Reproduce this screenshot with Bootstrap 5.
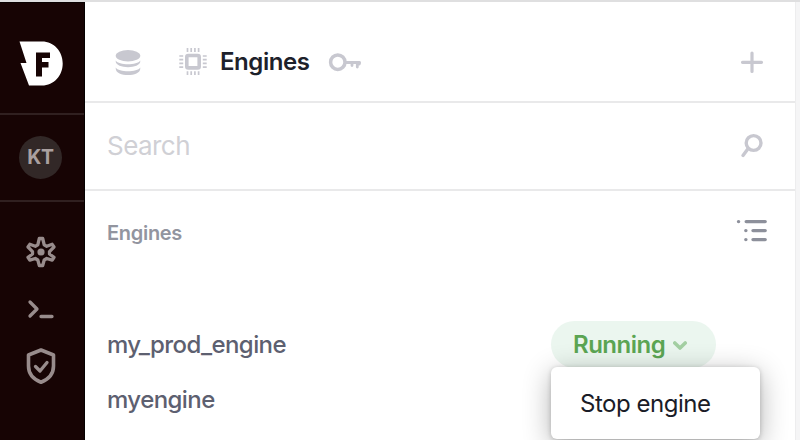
<!DOCTYPE html>
<html lang="en">
<head>
<meta charset="utf-8">
<meta name="viewport" content="width=device-width, initial-scale=1">
<title>Engines</title>
<link href="https://cdn.jsdelivr.net/npm/bootstrap@5.3.0/dist/css/bootstrap.min.css" rel="stylesheet">
<style>
body{font-family:Inter,"Liberation Sans",sans-serif;background:#f5f5f6;line-height:1}
svg{display:block;flex:none}
.app{height:440px;border-top:2px solid #dfdfe0}
.side{width:85px;background:#170404;border-right:1px solid #050101;border-top:1px solid #0a0202}
.side-sec{border-bottom:2px solid #302020}
.sec-logo{height:112px;padding:36px 0 0 18px}
.sec-user{height:87px;padding:21px 0 0 19px}
.avatar{width:43px;height:43px;background:#322827;color:#aaa0a0;font-size:19.5px;font-weight:700;letter-spacing:-.3px;padding-top:1px}
.side-icons{padding:33px 0 0 25px}
.panel{width:711px;border-right:1px solid #ededee}
.line{border-bottom:2px solid #e9e9ea}
.bar-top{height:101px;padding:21px 30px 0 30px}
.bar-find{height:88px;padding:0 30px 0 22px}
.bar-list{height:85px;padding:0 27px 0 22px}
.chip{margin-left:38px}
.ttl{font-size:24px;font-weight:600;letter-spacing:-.45px;color:#1d212b;margin:0 19px 0 13px;padding-top:1px}
.find{font-size:26px;letter-spacing:-.55px;color:#d0d0d5}
.sub{font-size:20px;font-weight:600;letter-spacing:-.3px;color:#92959f;margin-top:-1px}
.menu-ico{margin-top:-5px}
.eng-rows{padding:45px 79px 0 22px}
.eng-name{font-size:24px;font-weight:500;letter-spacing:-.57px;color:#5d6070}
.eng-row{height:47px}
.pill{width:165px;height:47px;background:#ebf6ef;color:#5ba553;font-size:24px;font-weight:600;letter-spacing:-.5px;padding-left:22px}
.pop{top:46px;left:0;width:209px;height:72px;border-radius:6px;font-size:24px;letter-spacing:-.47px;color:#1a1c27;padding:1px 0 0 29px;box-shadow:0 6px 28px rgba(0,0,0,.3),0 1px 5px rgba(0,0,0,.2)}
</style>
</head>
<body class="overflow-hidden">
<div class="app d-flex">
  <nav class="side flex-shrink-0">
    <div class="side-sec sec-logo">
      <svg width="46" height="50" viewBox="18 39 46 50"><path d="M19.500 41.500H42C54 41.500 62.700 51.500 62.700 63.500S54 85.500 42 85.500H29L20.500 63H26.500Z" fill="#fff"/><path d="M36 52.500H50V58H42V62H48.500V67.500H42V76.500H36Z" fill="#170404"/></svg>
    </div>
    <div class="side-sec sec-user"><div class="avatar rounded-circle d-flex align-items-center justify-content-center">KT</div></div>
    <div class="side-icons">
      <svg width="32" height="160" viewBox="25 235 32 160" fill="none" stroke="#988c8c" stroke-width="3.300" stroke-linecap="round" stroke-linejoin="round">
        <path d="M39.300 238.500H42.700L44.200 244.800L46.700 246.300L52.200 244.300L54 247L49.500 251.600V254L54 257.300L52.200 260.200L46.700 258.500L44.200 260L42.700 265.500H39.300L37.800 260L35.300 258.500L29.800 260.200L28 257.300L32.500 254V251.600L28 247L29.800 244.300L35.300 246.300L37.800 244.800Z"/>
        <circle cx="41" cy="252" r="3.600" fill="#988c8c" stroke="none"/>
        <path d="M30 302L37 309L30 316M41 316.500H52"/>
        <path d="M41 350L53.500 355V366C53.500 374 48 379.500 41 382.200C34 379.500 28.500 374 28.500 366V355Z" stroke-width="3.600"/>
        <path d="M35.500 366.500L40 371L47 362.500"/>
      </svg>
    </div>
  </nav>
  <main class="panel bg-white">
    <header class="bar-top line d-flex align-items-center">
      <svg width="26" height="28" viewBox="115 48 26 28" fill="#c8c8d0"><ellipse cx="128" cy="55.700" rx="12.300" ry="5.700"/><path d="M115.800 60.500C118.500 65.500 137.500 65.500 140.200 60.500C142 69.500 114 69.500 115.800 60.500ZM115.800 67.500C118.500 72.500 137.500 72.500 140.200 67.500C142 77.500 114 77.500 115.800 67.500Z"/></svg>
      <svg class="chip" width="28" height="28" viewBox="179 48 28 28" fill="none" stroke="#c8c8d0"><rect x="186.800" y="55.500" width="12.400" height="12.400" rx="1.500" stroke-width="3.600"/><path stroke-width="1.700" d="M187.500 48V52M191.200 48V52M194.900 48V52M198.600 48V52M187.500 71.200V75M191.200 71.200V75M194.900 71.200V75M198.600 71.200V75M179.300 56H183.200M179.300 59.700H183.200M179.300 63.400H183.200M179.300 67.100H183.200M202.800 56H206.700M202.800 59.700H206.700M202.800 63.400H206.700M202.800 67.100H206.700"/></svg>
      <h1 class="ttl">Engines</h1>
      <svg width="34" height="20" viewBox="328 52 34 20" fill="none" stroke="#c8c8d0"><circle cx="337.800" cy="62.200" r="7.200" stroke-width="3.500"/><path stroke-width="3" stroke-linecap="round" d="M346 62.500H359.500"/><path stroke-width="2.800" stroke-linecap="round" d="M352 63V65.500M357.300 63V67M359.300 63V64"/></svg>
      <svg class="ms-auto" width="26" height="26" viewBox="739 49 26 26" stroke="#c8c8d0" stroke-width="3.200" stroke-linecap="round"><path d="M752 53V71.500M742.500 62.300H761.500"/></svg>
    </header>
    <div class="bar-find line d-flex align-items-center justify-content-between">
      <span class="find">Search</span>
      <svg width="26" height="28" viewBox="739 133 26 28" fill="none" stroke="#c8c8d0" stroke-width="3.400" stroke-linecap="round"><circle cx="753.600" cy="144" r="7.400"/><path d="M748 149.800L743 156.500"/></svg>
    </div>
    <div class="bar-list d-flex align-items-center justify-content-between">
      <h2 class="sub mb-0">Engines</h2>
      <svg class="menu-ico" width="32" height="28" viewBox="735 217 32 28" fill="none" stroke="#8d909b" stroke-width="3.400" stroke-linecap="round"><path d="M737.500 221.600H737.600M745.200 221.600H764.200M744.800 230.600H744.900M752 230.600H764.200M744.800 239.600H744.900M752 239.600H764.200"/></svg>
    </div>
    <div class="eng-rows">
      <div class="eng-row d-flex align-items-center justify-content-between">
        <span class="eng-name">my_prod_engine</span>
        <div class="position-relative">
          <div class="pill rounded-pill d-flex align-items-center"><span>Running</span>
            <svg class="ms-2" width="16" height="12" viewBox="1 0 16 12" fill="none" stroke="#a3cfa2" stroke-width="3.600" stroke-linecap="round" stroke-linejoin="round"><path d="M2.800 4L8 9L13.200 4"/></svg>
          </div>
          <div class="pop position-absolute bg-white d-flex align-items-center"><span>Stop engine</span></div>
        </div>
      </div>
      <div class="eng-row d-flex align-items-center mt-2"><span class="eng-name">myengine</span></div>
    </div>
  </main>
</div>
<script src="https://cdn.jsdelivr.net/npm/bootstrap@5.3.0/dist/js/bootstrap.bundle.min.js"></script>
</body>
</html>
